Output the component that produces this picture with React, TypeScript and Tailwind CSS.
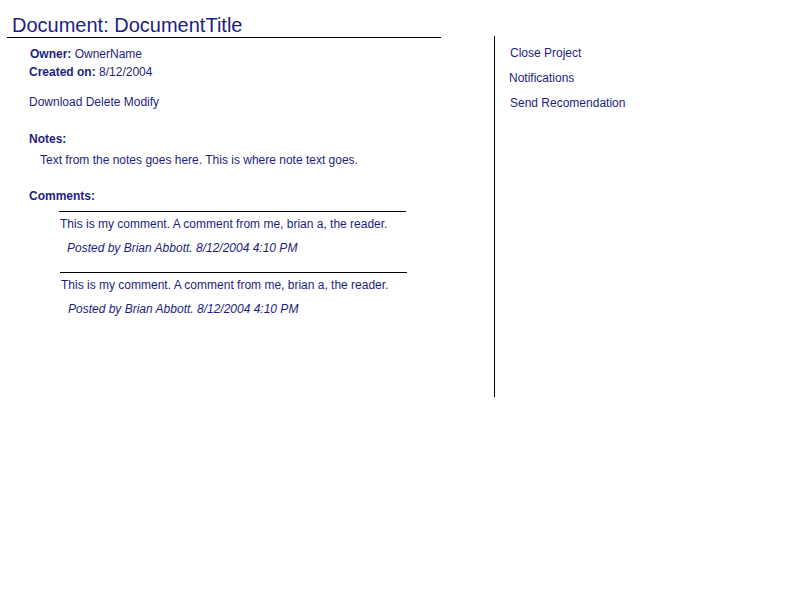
export default function App() {
  const comments = [
    { shift: "ml-[30px]", text: "This is my comment. A comment from me, brian a, the reader.", meta: "Posted by Brian Abbott. 8/12/2004 4:10 PM", mt: "mt-[6px]" },
    { shift: "ml-[31px]", text: "This is my comment. A comment from me, brian a, the reader.", meta: "Posted by Brian Abbott. 8/12/2004 4:10 PM", mt: "mt-[15px]" },
  ];

  return (
    <div className="flex min-h-[600px] bg-white font-['Liberation_Sans',Arial,sans-serif] text-[#1e1e80]">
      <div className="w-[441px] shrink-0">
        <div className="ml-[7px] w-[434px] border-b border-black pl-[5px] pt-[13px] text-[20px] leading-[24px]">
          Document: DocumentTitle
        </div>
        <div className="pl-[29px] text-[12px] leading-[18px]">
          <div className="mt-[8px] pl-px leading-[17px]">
            <span className="font-bold">Owner:</span> OwnerName
          </div>
          <div>
            <span className="font-bold">Created on:</span> 8/12/2004
          </div>
          <div className="mt-[12px]">Download Delete Modify</div>
          <div className="mt-[19px] font-bold">Notes:</div>
          <div className="mt-[3px] pl-[11px]">
            Text from the notes goes here. This is where note text goes.
          </div>
          <div className="mt-[18px] font-bold">Comments:</div>
          {comments.map((c, i) => (
            <div key={i} className={`${c.mt} ${c.shift} w-[347px] border-t border-black pt-[3px]`}>
              <div className="pl-px">{c.text}</div>
              <div className="mt-[6px] pl-[8px] italic">{c.meta}</div>
            </div>
          ))}
        </div>
      </div>
      <div className="ml-[53px] mt-[36px] h-[361px] border-l border-black pl-[15px] pt-[8px] text-[12px] leading-[18px]">
        <div>Close Project</div>
        <div className="-ml-px mt-[7px]">Notifications</div>
        <div className="mt-[7px]">Send Recomendation</div>
      </div>
    </div>
  );
}
